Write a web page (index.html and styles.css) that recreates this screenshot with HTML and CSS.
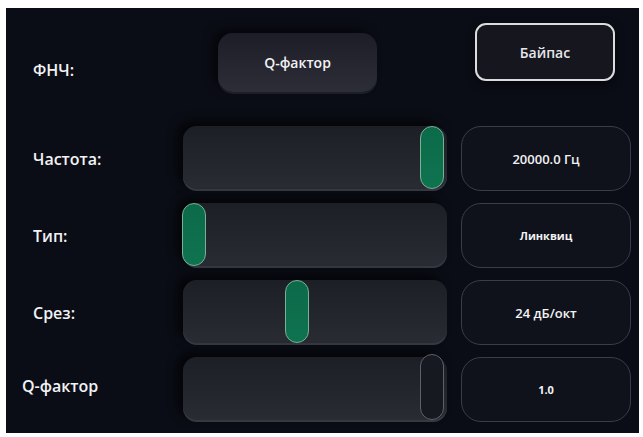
FILE: index.html
```html
<!DOCTYPE html>
<html lang="ru">
<head>
<meta charset="utf-8">
<title>ФНЧ</title>
<link rel="stylesheet" href="styles.css">
</head>
<body>
<div class="panel">
  <div class="header">
    <div class="hlabel">ФНЧ:</div>
    <div class="hcell"><button class="qbtn">Q-фактор</button></div>
    <div class="hcell"><button class="bypass">Байпас</button></div>
  </div>
  <div class="rows">
    <div class="label">Частота:</div>
    <div class="track"><div class="thumb" style="left:237px"></div></div>
    <div class="value big">20000.0 Гц</div>

    <div class="label">Тип:</div>
    <div class="track"><div class="thumb" style="left:-1px"></div></div>
    <div class="value">Линквиц</div>

    <div class="label">Срез:</div>
    <div class="track"><div class="thumb" style="left:102px"></div></div>
    <div class="value big">24 дБ/окт</div>

    <div class="label qlabel">Q-фактор</div>
    <div class="track"><div class="thumb empty" style="left:237px"></div></div>
    <div class="value small">1.0</div>
  </div>
</div>
</body>
</html>
```

FILE: styles.css
```css
html, body {
  margin: 0;
  padding: 0;
  background: #ffffff;
}
body {
  font-family: "Open Sans", "Noto Sans", sans-serif;
  color: #f2f2f4;
}
.panel {
  margin: 8px 4px 0 6px;
  width: 633px;
  height: 425px;
  background: #0b0d16;
  box-sizing: border-box;
  padding-left: 27px;
  overflow: hidden;
}
.header {
  display: grid;
  grid-template-columns: 150px 292px 160px;
  height: 118px;
}
.hlabel {
  margin-top: 51px;
  font-size: 16px;
  font-weight: 600;
  line-height: 22px;
}
.hcell {
  display: flex;
}
.qbtn {
  margin: 25px 0 0 35px;
  width: 159px;
  height: 59px;
  border: none;
  border-radius: 15px;
  background: linear-gradient(180deg, #1c1d26 0%, #262730 60%, #2c2d36 100%);
  box-shadow: -6px -4px 10px rgba(0,0,0,0.55), 0 2px 0 rgba(70,72,82,0.35);
  color: #f2f2f4;
  font-family: "Open Sans", "Noto Sans", sans-serif;
  font-size: 14px;
  font-weight: 600;
}
.bypass {
  margin: 15px 0 0 0;
  width: 140px;
  height: 58px;
  border: 2px solid #dcdcde;
  border-radius: 11px;
  background: #15161e;
  box-shadow: 0 3px 8px rgba(0,0,0,0.6);
  color: #e6e6ea;
  font-family: "Open Sans", "Noto Sans", sans-serif;
  font-size: 14px;
  font-weight: 600;
}
.rows {
  display: grid;
  grid-template-columns: 136px 264px 170px;
  column-gap: 14px;
  grid-auto-rows: 65px;
  row-gap: 12px;
}
.label {
  display: flex;
  align-items: center;
  font-size: 16px;
  font-weight: 600;
}
.qlabel {
  margin-left: -11px;
  padding-bottom: 8px;
}
.track {
  position: relative;
  border-radius: 14px;
  background: linear-gradient(180deg, #1d1f27 0%, #24262e 55%, #2a2c34 100%);
  box-shadow: -6px -5px 10px rgba(0,0,0,0.65), inset 0 -2px 0 rgba(80,82,92,0.35);
}
.thumb {
  position: absolute;
  top: 0;
  width: 22px;
  height: 61px;
  border: 1.5px solid #79b197;
  border-radius: 12px;
  background: linear-gradient(180deg, #0c6a49, #0f7350);
}
.thumb.empty {
  top: -3px;
  height: 64px;
  border-color: #5e616b;
  background: #171921;
}
.value {
  display: flex;
  align-items: center;
  justify-content: center;
  border: 1.5px solid #3a3d47;
  border-radius: 20px;
  background: #10121b;
  font-size: 11px;
  font-weight: 700;
}
.value.big {
  font-size: 13px;
  font-weight: 600;
}
.value.small {
  font-size: 11px;
}
```
